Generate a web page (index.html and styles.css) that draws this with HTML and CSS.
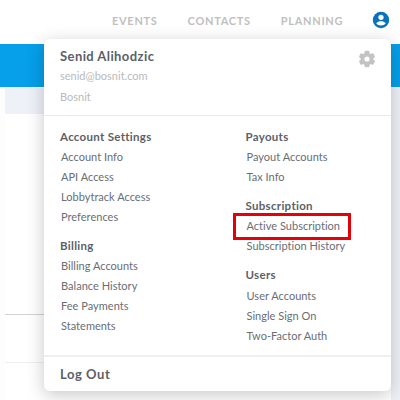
FILE: index.html
```
<!DOCTYPE html>
<html lang="en">
<head>
<meta charset="utf-8">
<title>Account menu</title>
<link rel="stylesheet" href="styles.css">
</head>
<body>
<div class="page">
  <header class="topbar">
    <nav class="nav"><a>EVENTS</a><a>CONTACTS</a><a>PLANNING</a></nav>
    <svg class="avatar" width="18" height="18" viewBox="0 0 18 18">
      <circle cx="9" cy="9" r="8.2" fill="#0872bf"/>
      <circle cx="9" cy="6.3" r="2.6" fill="#fff"/>
      <path d="M4.2 12.6C5.2 10.9 7.2 10.3 9 10.3s3.8.6 4.8 2.3c-1 1.3-2.9 2-4.8 2s-3.8-.7-4.8-2z" fill="#fff"/>
    </svg>
  </header>
  <div class="banner"></div>
  <main class="content">
    <div class="sheet">
      <div class="strip"></div>
      <div class="block"></div>
      <div class="row"></div>
      <div class="rest"></div>
    </div>
    <div class="rail"></div>
  </main>
</div>
<section class="menu">
  <header class="profile">
    <div>
      <h1>Senid Alihodzic</h1>
      <p class="email">senid@bosnit.com</p>
      <p class="company">Bosnit</p>
    </div>
    <svg class="gear" width="18" height="18" viewBox="0 0 18 18">
      <g fill="#c2c3c5">
        <rect x="6.5" y="0.8" width="5" height="16.4" rx="1.3"/>
        <rect x="6.5" y="0.8" width="5" height="16.4" rx="1.3" transform="rotate(60 9 9)"/>
        <rect x="6.5" y="0.8" width="5" height="16.4" rx="1.3" transform="rotate(120 9 9)"/>
        <circle cx="9" cy="9" r="6.3"/>
      </g>
      <circle cx="9" cy="9" r="2.6" fill="#fff"/>
    </svg>
  </header>
  <div class="links">
    <div class="column">
      <div class="group"><h2>Account Settings</h2><a>Account Info</a><a>API Access</a><a>Lobbytrack Access</a><a>Preferences</a></div>
      <div class="group"><h2>Billing</h2><a>Billing Accounts</a><a>Balance History</a><a>Fee Payments</a><a>Statements</a></div>
    </div>
    <div class="column">
      <div class="group"><h2>Payouts</h2><a>Payout Accounts</a><a>Tax Info</a></div>
      <div class="group"><h2>Subscription</h2><a class="marked">Active Subscription</a><a>Subscription History</a></div>
      <div class="group"><h2>Users</h2><a>User Accounts</a><a>Single Sign On</a><a>Two-Factor Auth</a></div>
    </div>
  </div>
  <footer class="logout">Log Out</footer>
</section>
</body>
</html>
```
FILE: styles.css
```
*, *::after { box-sizing: border-box; }
body {
  margin: 0;
  width: 400px;
  height: 400px;
  overflow: hidden;
  position: relative;
  background: #fff;
  font-family: Lato, "Liberation Sans", sans-serif;
  color: #5c5f66;
}
h1, h2, p { margin: 0; }
.page { height: 400px; display: flex; flex-direction: column; }
.topbar {
  height: 44px;
  display: flex;
  align-items: flex-start;
  padding: 11px 10px 0 112px;
}
.nav {
  display: flex;
  flex: 1;
  gap: 30px;
  font-size: 11px;
  font-weight: 700;
  line-height: 19px;
  letter-spacing: 0.7px;
  color: #bfbfc0;
}
.banner { height: 43px; background: #069fe9; }
.content { flex: 1; padding: 0 0 0 5px; background: #fdfdfd; display: flex; }
.sheet { flex: 1; padding-top: 1px; }
.rail { width: 9px; background: #f0f1f7; }
.strip { height: 26px; background: #eef1f8; }
.block { height: 201px; border-bottom: 1px solid #d2d2d4; background: #fff; }
.row { height: 48px; border-bottom: 1px solid #efeff0; background: #fff; }
.rest { height: 37px; background: #fff; }
.menu {
  position: absolute;
  left: 44px;
  top: 39px;
  width: 347px;
  height: 352px;
  border-radius: 6px;
  background: #fff;
  box-shadow: 0 4px 18px rgba(0, 0, 0, 0.22);
  display: flex;
  flex-direction: column;
}
.profile {
  height: 77px;
  padding: 7px 15px 0 16px;
  border-bottom: 1px solid #e9e9ea;
  display: flex;
  justify-content: space-between;
}
.profile h1 { font-size: 13px; line-height: 20px; letter-spacing: 0.42px; font-weight: 700; }
.profile p { font-size: 11px; line-height: 20.5px; letter-spacing: 0; color: #b9babc; }
.gear { margin-top: 4px; }
.links { height: 239px; display: flex; padding: 10.5px 0 0 16px; }
.column { flex: 0 0 185.5px; }
.column:last-child { flex-basis: 145px; }
.group { margin-bottom: 9.5px; }
.group h2 { font-size: 11.5px; line-height: 20px; letter-spacing: 0.3px; font-weight: 700; }
.group:last-child h2 { position: relative; top: -0.5px; }
.group a {
  display: block;
  width: max-content;
  font-size: 11px;
  line-height: 20px;
  letter-spacing: 0.02px;
  color: #6a6d75;
  padding-left: 1px;
  position: relative;
}
.marked::after {
  content: "";
  position: absolute;
  left: -13px;
  top: -3px;
  width: 118px;
  height: 27px;
  border: 3px solid #e60008;
}
.logout {
  height: 36px;
  border-top: 2px solid #efeff0;
  padding-left: 16px;
  font-size: 13px;
  font-weight: 700;
  line-height: 34px;
  letter-spacing: 0.55px;
}
```
